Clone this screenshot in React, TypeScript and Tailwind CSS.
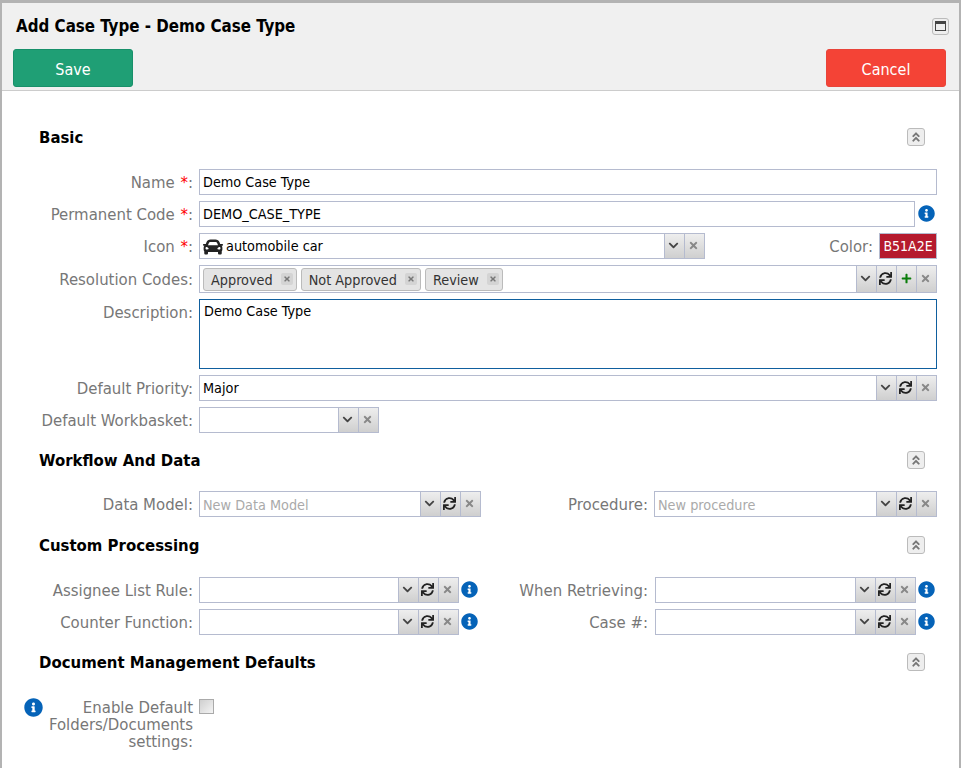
import React from "react";
import { FaCar, FaInfoCircle, FaSync, FaChevronDown, FaTimes, FaPlus, FaAngleDoubleUp } from "react-icons/fa";

const font = { fontFamily: '"DejaVu Sans Condensed", "Noto Sans", Tahoma, sans-serif' };

function Label({ text, req, width = "w-[191px]" }: { text: string; req?: boolean; width?: string }) {
  return (
    <div className={`${width} mr-[1px] h-[26px] shrink-0 text-right text-[16.6px] leading-[27px] text-[#777] whitespace-nowrap`}>
      {text}
      {req && <span className="ml-[1px] text-[#f00]"> *</span>}:
    </div>
  );
}

function Btn({ children, w = "w-[20px]" }: { children: React.ReactNode; w?: string }) {
  return (
    <div className={`${w} self-stretch flex items-center justify-center border-l border-[#b5bbcf] bg-gradient-to-b from-[#eeeeee] to-[#cfcfcf] pb-[2px]`}>
      {children}
    </div>
  );
}

const Down = () => (
  <Btn><FaChevronDown className="mr-[2px] text-[11px] text-[#444]" /></Btn>
);
const Sync = () => (
  <Btn><FaSync className="mr-[2px] text-[13px] text-[#222]" /></Btn>
);
const Clear = () => (
  <Btn><FaTimes className="mr-[2px] text-[11px] text-[#888]" /></Btn>
);
const Plus = () => (
  <Btn><FaPlus className="mr-[1px] text-[11px] text-[#0a7d0a]" /></Btn>
);
const Info = ({ cls = "text-[17px]" }: { cls?: string }) => (
  <FaInfoCircle className={`text-[#0563b8] shrink-0 ${cls}`} />
);

function Combo({
  value,
  placeholder,
  sync,
  clear = true,
  className = "",
  icon,
}: {
  value?: string;
  placeholder?: string;
  sync?: boolean;
  clear?: boolean;
  className?: string;
  icon?: React.ReactNode;
}) {
  return (
    <div className={`flex h-[26px] border border-[#b5bbcf] bg-white ${className}`}>
      <div className="flex-1 min-w-0 flex items-center gap-[3px] pl-[3px] pt-[1px] text-[14.3px] text-black whitespace-nowrap">
        {icon}
        {value}
        {placeholder && <span className="pt-[2px] text-[#aaa]">{placeholder}</span>}
      </div>
      <Down />
      {sync && <Sync />}
      {clear && <Clear />}
    </div>
  );
}

function Section({ title, children }: { title: string; children: React.ReactNode }) {
  return (
    <div>
      <div className="flex h-[20px] items-center justify-between pl-[37px] pr-[34px]">
        <div className="pt-[2px] text-[16.6px] font-bold text-black">{title}</div>
        <div className="flex h-[18px] w-[18px] items-center justify-center rounded-[3px] border border-[#bbb] bg-[#eee]">
          <FaAngleDoubleUp className="text-[12px] text-[#777]" />
        </div>
      </div>
      {children}
    </div>
  );
}

function Chip({ text }: { text: string }) {
  return (
    <div className="flex h-[23px] items-center gap-[8px] rounded-[3px] border border-[#bbb] bg-[#e4e4e4] pl-[7px] pr-[3px] text-[14.3px] text-[#333]">
      <span className="pt-[3px]">{text}</span>
      <span className="flex h-[12px] w-[12px] items-center justify-center rounded-[2px] bg-[#d4d4d4]">
        <FaTimes className="text-[8px] text-[#777]" />
      </span>
    </div>
  );
}

const inputCls = "flex h-[26px] items-center border border-[#b5bbcf] bg-white pl-[3px] pt-[1px] text-[14.3px] text-black";

export default function App() {
  return (
    <div className="h-[768px] overflow-hidden bg-white border-t-[3px] border-l-2 border-r-2 border-[#b3b3b3]" style={font}>
      <div className="h-[88px] border-b border-[#ccc] bg-[#f0f0f0]">
        <div className="flex h-[46px] items-center justify-between pl-[14px] pr-[10px]">
          <div className="pt-[1px] text-[16.8px] font-bold text-black">Add Case Type - Demo Case Type</div>
          <div className="flex h-[17px] w-[17px] items-center justify-center rounded-[3px] border border-[#bbb] bg-[#eee]">
            <div className="h-[10px] w-[11px] border border-[#444] border-t-[3px]" />
          </div>
        </div>
        <div className="flex justify-between pl-[11px] pr-[13px]">
          <div className="flex h-[38px] w-[120px] items-center justify-center rounded-[3px] border border-[#18906a] bg-[#1f9f75] pt-[3px] text-[16px] text-white">Save</div>
          <div className="flex h-[38px] w-[120px] items-center justify-center rounded-[3px] border border-[#e8443a] bg-[#f44336] pt-[3px] text-[16px] text-white">Cancel</div>
        </div>
      </div>

      <div className="pt-[36px]">
        <Section title="Basic">
          <div className="mt-[22px] flex flex-col gap-[6px] pr-[22px]">
            <div className="flex gap-[5px]">
              <Label text="Name" req />
              <div className={`${inputCls} flex-1`}>Demo Case Type</div>
            </div>
            <div className="flex gap-[5px]">
              <Label text="Permanent Code" req />
              <div className={`${inputCls} flex-1`}>DEMO_CASE_TYPE</div>
              <Info cls="text-[17px] mt-[4px] -ml-[2px] mr-[2px]" />
            </div>
            <div className="flex gap-[5px]">
              <Label text="Icon" req />
              <Combo value="automobile car" className="w-[506px]" icon={<FaCar className="text-[20px] text-[#222]" />} />
              <div className="h-[26px] flex-1 pr-[1px] text-right text-[16.6px] leading-[27px] text-[#777]">Color:</div>
              <div className="flex h-[26px] w-[58px] items-center justify-center border border-[#b5bbcf] bg-[#b51a2e] text-[14px] text-white">B51A2E</div>
            </div>
            <div className="flex gap-[5px]">
              <div className="pt-[1px]"><Label text="Resolution Codes" /></div>
              <div className="flex h-[28px] flex-1 border border-[#b5bbcf] bg-white">
                <div className="flex flex-1 items-center gap-[4px] pl-[3px]">
                  <Chip text="Approved" />
                  <Chip text="Not Approved" />
                  <Chip text="Review" />
                </div>
                <Down />
                <Sync />
                <Plus />
                <Clear />
              </div>
            </div>
            <div className="flex gap-[5px]">
              <Label text="Description" />
              <div className="h-[70px] flex-1 border border-[#0f5f9e] bg-white pl-[4px] pt-[1px] text-[14.3px] text-black">Demo Case Type</div>
            </div>
            <div className="flex gap-[5px]">
              <Label text="Default Priority" />
              <Combo value="Major" sync className="flex-1" />
            </div>
            <div className="flex gap-[5px]">
              <Label text="Default Workbasket" />
              <Combo className="w-[180px]" />
            </div>
          </div>
        </Section>

        <div className="mt-[17px]">
          <Section title="Workflow And Data">
            <div className="mt-[21px] flex pr-[22px]">
              <Label text="Data Model" />
              <Combo placeholder="New Data Model" sync className="ml-[5px] w-[282px]" />
              <div className="h-[26px] flex-1 pr-[6px] text-right text-[16.6px] leading-[27px] text-[#777]">Procedure:</div>
              <Combo placeholder="New procedure" sync className="w-[283px]" />
            </div>
          </Section>
        </div>

        <div className="mt-[18px]">
          <Section title="Custom Processing">
            <div className="mt-[22px] flex flex-col gap-[6px] pr-[24px]">
              {[
                ["Assignee List Rule", "When Retrieving"],
                ["Counter Function", "Case #"],
              ].map(([a, b]) => (
                <div key={a} className="flex">
                  <Label text={a} />
                  <Combo sync className="ml-[5px] w-[260px]" />
                  <Info cls="text-[17px] mt-[4px] ml-[2px]" />
                  <div className="h-[26px] flex-1 pr-[7px] text-right text-[16.6px] leading-[27px] text-[#777]">{b}:</div>
                  <Combo sync className="w-[261px]" />
                  <Info cls="text-[17px] mt-[4px] ml-[2px]" />
                </div>
              ))}
            </div>
          </Section>
        </div>

        <div className="mt-[17px]">
          <Section title="Document Management Defaults">
            <div className="mt-[27px] flex">
              <Info cls="ml-[22px] mt-[-1px] text-[19px]" />
              <div className="w-[150px] shrink-0 text-right text-[16.6px] leading-[17px] text-[#777]">Enable Default Folders/Documents settings:</div>
              <div className="ml-[6px] h-[15px] w-[15px] border border-[#aaa] bg-gradient-to-br from-[#cfcfcf] to-[#f4f4f4]" />
            </div>
          </Section>
        </div>
      </div>
    </div>
  );
}
